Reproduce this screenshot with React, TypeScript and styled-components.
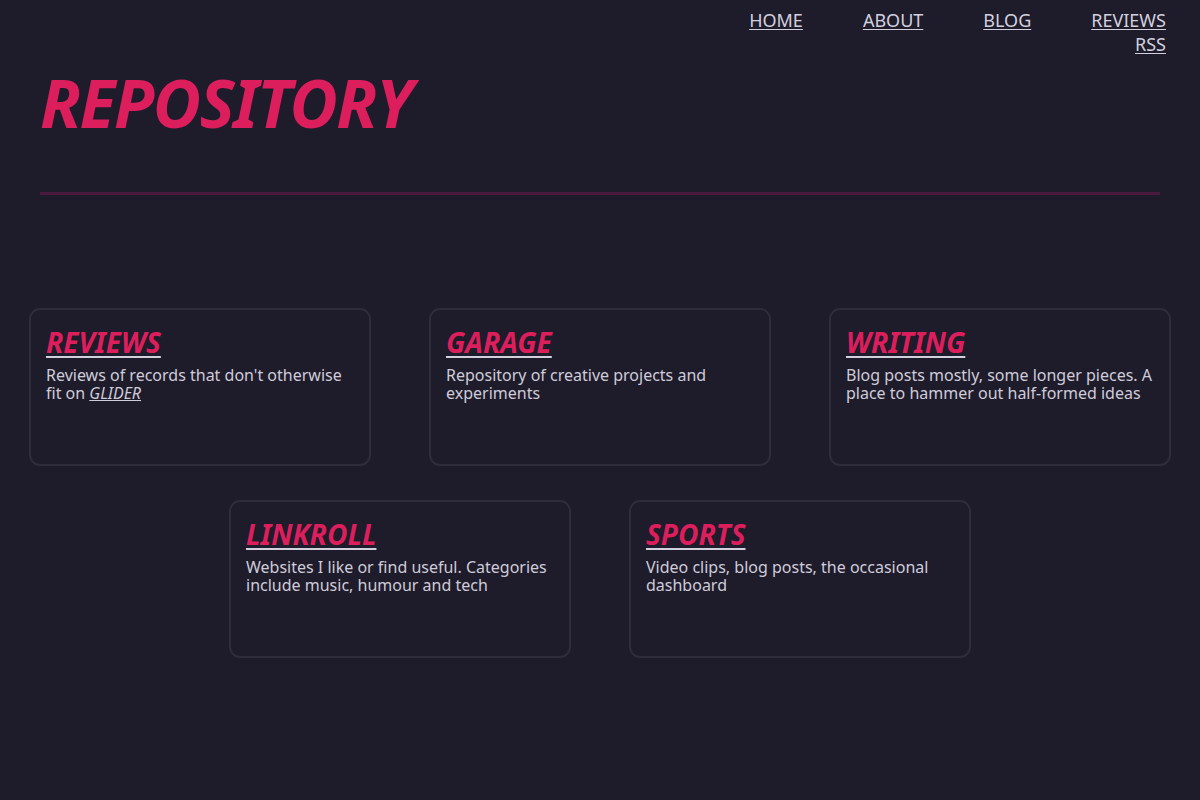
import React from "react";
import styled, { createGlobalStyle } from "styled-components";

const GlobalStyle = createGlobalStyle`
  html, body {
    margin: 0;
    padding: 0;
    background: #1e1b2b;
    color: #d3d0de;
    font-family: "Noto Sans", sans-serif;
  }
  * { box-sizing: border-box; }
`;

const Page = styled.div`
  min-height: 800px;
  background: #1e1b2b;
`;

const Nav = styled.nav`
  display: flex;
  justify-content: flex-end;
  padding: 8px 34px 0 0;
`;

const NavList = styled.ul`
  list-style: none;
  margin: 0;
  padding: 0;
  display: flex;
  flex-wrap: wrap;
  justify-content: flex-end;
  column-gap: 60px;
  width: 470px;
`;

const NavItem = styled.li`
  font-size: 18px;
  line-height: 24px;
`;

const NavLink = styled.a`
  color: #d3d0de;
  text-decoration: underline;
  text-underline-offset: 2px;
`;

const Title = styled.h1`
  margin: 6px 0 0;
  padding: 0 40px;
  font-size: 66px;
  line-height: 80px;
  font-weight: 700;
  font-style: italic;
  letter-spacing: -1.4px;
  color: #dc1f5c;
`;

const Divider = styled.hr`
  margin: 50px 40px 0;
  border: none;
  height: 3px;
  background: #4a1a3c;
`;

const Cards = styled.section`
  display: flex;
  flex-wrap: wrap;
  justify-content: center;
  margin-top: 113px;
`;

const Card = styled.article`
  width: 342px;
  height: 158px;
  margin: 0 29px 34px;
  padding: 15px;
  border: 2px solid #2f2c3b;
  border-radius: 11px;
`;

const CardTitle = styled.h2`
  margin: 0;
  font-size: 28px;
  line-height: 34px;
  font-weight: 700;
  font-style: italic;
`;

const CardLink = styled.a`
  color: #dc1f5c;
  text-decoration: underline;
  text-decoration-color: #d3d0de;
  text-decoration-thickness: 2px;
  text-underline-offset: 3px;
`;

const CardText = styled.p`
  margin: 7px 0 0;
  font-size: 16px;
  line-height: 18px;
  color: #cfccd9;
`;

const InlineLink = styled.a`
  color: #cfccd9;
  font-style: italic;
  text-decoration: underline;
`;

const sections = [
  { title: "REVIEWS", text: <>Reviews of records that don't otherwise fit on <InlineLink href="#">GLIDER</InlineLink></> },
  { title: "GARAGE", text: <>Repository of creative projects and experiments</> },
  { title: "WRITING", text: <>Blog posts mostly, some longer pieces. A place to hammer out half-formed ideas</> },
  { title: "LINKROLL", text: <>Websites I like or find useful. Categories include music, humour and tech</> },
  { title: "SPORTS", text: <>Video clips, blog posts, the occasional dashboard</> },
];

export default function App() {
  return (
    <Page>
      <GlobalStyle />
      <Nav>
        <NavList>
          {["HOME", "ABOUT", "BLOG", "REVIEWS", "RSS"].map((n) => (
            <NavItem key={n}>
              <NavLink href="#">{n}</NavLink>
            </NavItem>
          ))}
        </NavList>
      </Nav>
      <Title>REPOSITORY</Title>
      <Divider />
      <Cards>
        {sections.map((s) => (
          <Card key={s.title}>
            <CardTitle>
              <CardLink href="#">{s.title}</CardLink>
            </CardTitle>
            <CardText>{s.text}</CardText>
          </Card>
        ))}
      </Cards>
    </Page>
  );
}
